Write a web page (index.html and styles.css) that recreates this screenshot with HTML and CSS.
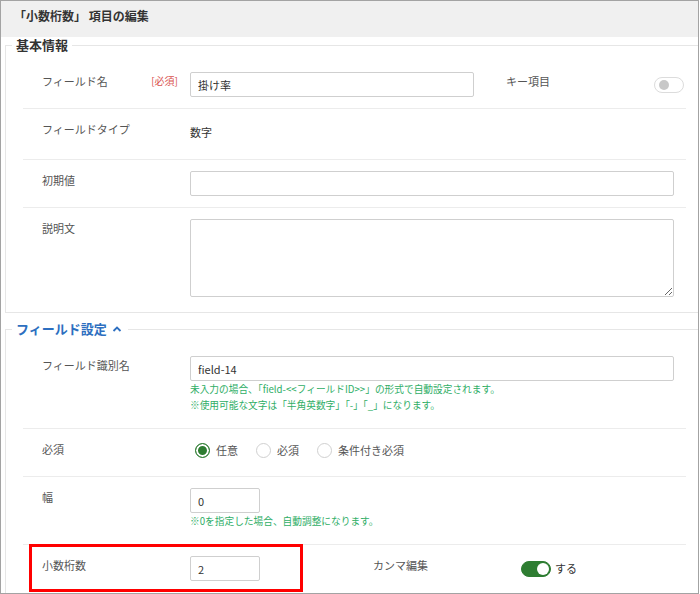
FILE: index.html
```html
<!DOCTYPE html>
<html lang="ja">
<head>
    <meta charset="UTF-8">
    <title>項目の編集</title>
    <link rel="stylesheet" href="styles.css">
</head>
<body>
    <div class="frame">
        <div class="dialog-title">「小数桁数」 項目の編集</div>

        <!-- 基本情報 -->
        <fieldset class="group">
            <legend>基本情報</legend>
            <div class="group-body">
                <div class="row">
                    <div class="label">フィールド名<span class="req">[必須]</span></div>
                    <div class="value value-key"><input class="input input-name" type="text" value="掛け率"></div>
                    <div class="label">キー項目</div>
                    <span class="toggle"></span>
                </div>
                <div class="row row-type">
                    <div class="label">フィールドタイプ</div>
                    <div class="value text-value">数字</div>
                </div>
                <div class="row">
                    <div class="label">初期値</div>
                    <div class="value"><input class="input" type="text"></div>
                </div>
                <div class="row">
                    <div class="label">説明文</div>
                    <div class="value"><textarea class="textarea"></textarea></div>
                </div>
            </div>
        </fieldset>

        <!-- フィールド設定 -->
        <fieldset class="group group-settings">
            <legend class="legend-link"><span>フィールド設定</span><svg class="chevron" width="10" height="8" viewBox="0 0 10 8"><polyline points="1.5,6 5,2.5 8.5,6" fill="none" stroke="#2d6fc0" stroke-width="1.8"/></svg></legend>
            <div class="group-body">
                <div class="row">
                    <div class="label">フィールド識別名</div>
                    <div class="value">
                        <input class="input" type="text" value="field-14">
                        <p class="hint">未入力の場合、「field-&lt;&lt;フィールドID&gt;&gt;」の形式で自動設定されます。<br>※使用可能な文字は「半角英数字」「-」「_」になります。</p>
                    </div>
                </div>
                <div class="row">
                    <div class="label">必須</div>
                    <div class="value">
                        <div class="radio-group">
                            <span class="option"><span class="radio checked"></span>任意</span>
                            <span class="option"><span class="radio"></span>必須</span>
                            <span class="option"><span class="radio"></span>条件付き必須</span>
                        </div>
                    </div>
                </div>
                <div class="row">
                    <div class="label">幅</div>
                    <div class="value">
                        <input class="input input-small" type="text" value="0">
                        <p class="hint">※0を指定した場合、自動調整になります。</p>
                    </div>
                </div>
                <div class="row row-decimal">
                    <div class="label">小数桁数</div>
                    <div class="value value-half"><input class="input input-small" type="text" value="2"></div>
                    <div class="label">カンマ編集</div>
                    <span class="toggle on"></span>
                    <span class="toggle-text">する</span>
                    <div class="highlight"></div>
                </div>
            </div>
        </fieldset>
    </div>
</body>
</html>
```

FILE: styles.css
```css
/* 全体 */
body {
    margin: 0;
    font-family: "Noto Sans CJK JP", "Noto Sans", sans-serif;
    color: #333;
    background: #fff;
}

.frame {
    width: 699px;
    height: 594px;
    box-sizing: border-box;
    border: 1px solid #a3a3a3;
    overflow: hidden;
}

/* タイトル */
.dialog-title {
    height: 36px;
    box-sizing: border-box;
    padding: 7px 13px 0;
    background-color: #f0f0f0;
    font-size: 12px;
    line-height: 16px;
    font-weight: bold;
    color: #333;
}

/* グループ */
.group {
    margin: 0 0 0 4px;
    padding: 8px 0 4px 0;
    border: 1px solid #e6e6e6;
    border-right: none;
    min-width: 0;
}

.group-body {
    padding: 0 12px 0 17px;
}

.group legend {
    margin-left: 6px;
    padding: 0 4px;
    font-size: 13px;
    line-height: 16px;
    font-weight: bold;
    color: #333;
}

.group-settings {
    margin-top: 8px;
}

.group .legend-link {
    display: flex;
    align-items: center;
    gap: 5px;
    color: #2d6fc0;
}

.chevron {
    margin-right: 2px;
}

/* 行 */
.row {
    display: flex;
    align-items: flex-start;
    padding: 11px 1px 11px 19px;
    border-bottom: 1px solid #ececec;
    position: relative;
}

.group-body .row:last-child {
    border-bottom: none;
}

.row-type {
    padding-bottom: 15px;
}

.label {
    flex: 0 0 148px;
    display: flex;
    font-size: 11px;
    line-height: 16px;
    padding-top: 1px;
    color: #555;
}

.req {
    margin-left: auto;
    margin-right: 12px;
    font-size: 10px;
    color: #d9534f;
}

.value {
    flex: 0 0 484px;
}

.value-key {
    flex-basis: 316px;
}

.value-half {
    flex-basis: 183px;
}

.text-value {
    font-size: 11px;
    line-height: 24px;
    color: #333;
}

/* 入力 */
.input {
    display: block;
    width: 100%;
    height: 25px;
    box-sizing: border-box;
    padding: 0 7px;
    border: 1px solid #cfcfcf;
    border-radius: 2px;
    font-family: inherit;
    font-size: 11px;
    color: #333;
}

.input-name {
    width: 284px;
}

.input-small {
    width: 70px;
}

.textarea {
    display: block;
    width: 100%;
    height: 78px;
    box-sizing: border-box;
    border: 1px solid #cfcfcf;
    border-radius: 2px;
    font-family: inherit;
}

.hint {
    margin: 0;
    padding-bottom: 4px;
    font-size: 9.7px;
    line-height: 16px;
    color: #2fae66;
}

/* ラジオ */
.radio-group {
    display: flex;
    align-items: center;
    height: 20px;
    margin-bottom: 5px;
    padding-left: 5px;
}

.option {
    display: flex;
    align-items: center;
    gap: 6px;
    margin-right: 18px;
    font-size: 11px;
    color: #555;
}

.radio {
    width: 15px;
    height: 15px;
    box-sizing: border-box;
    border: 1px solid #d0d0d0;
    border-radius: 50%;
    background: #fff;
}

.radio.checked {
    border-color: #2e7d32;
    background: #2e7d32;
    box-shadow: inset 0 0 0 2px #fff;
}

/* トグル */
.toggle {
    flex: 0 0 auto;
    position: relative;
    width: 30px;
    height: 16px;
    margin-top: 5px;
    box-sizing: border-box;
    border: 1px solid #dcdcdc;
    border-radius: 8px;
    background: #fff;
}

.toggle::after {
    content: "";
    position: absolute;
    left: 4px;
    top: 2px;
    width: 10px;
    height: 10px;
    border-radius: 50%;
    background: #c8c8c8;
}

.toggle.on {
    border-color: #2e7d32;
    background: #2e7d32;
}

.toggle.on::after {
    left: auto;
    right: 1px;
    top: 1px;
    width: 12px;
    height: 12px;
    background: #fff;
}

.toggle-text {
    margin-left: 4px;
    margin-top: 4px;
    font-size: 11px;
    line-height: 16px;
    color: #333;
}

/* 強調枠 */
.highlight {
    position: absolute;
    left: 6px;
    top: -1px;
    width: 274px;
    height: 48px;
    box-sizing: border-box;
    border: 3px solid #ff0000;
}
```
